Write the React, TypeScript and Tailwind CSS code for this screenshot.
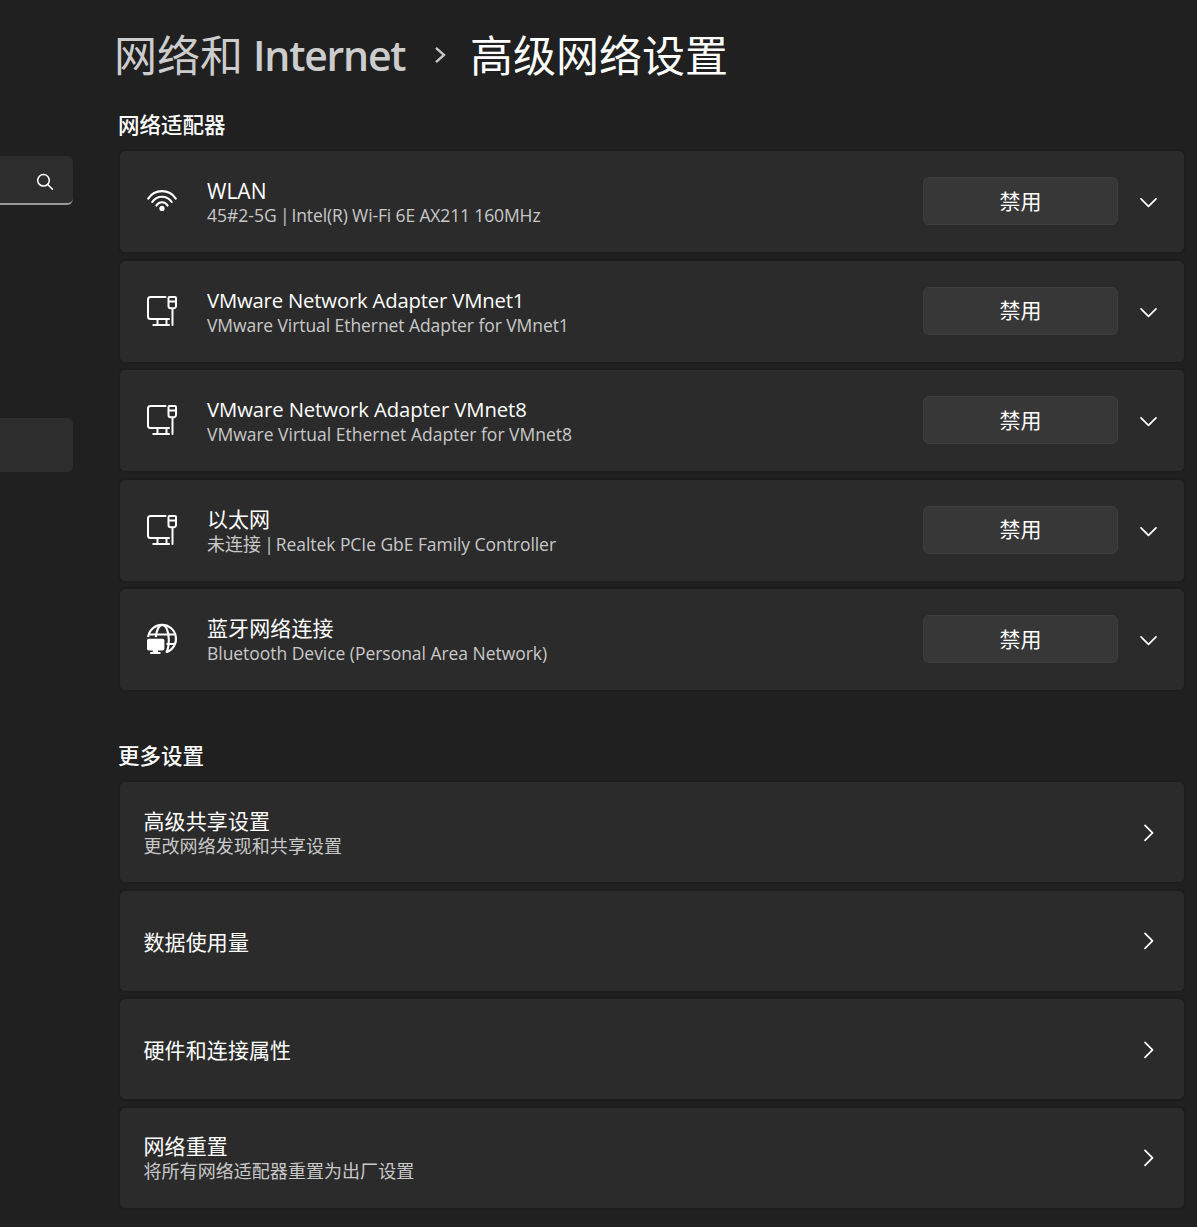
import type { ReactNode } from "react";

type Adapter = {
  icon: ReactNode;
  title: string;
  titleClass: string;
  status?: string;
  statusClass?: string;
  detail: string;
  detailClass: string;
};

function WifiIcon() {
  return (
    <svg width="32" height="32" viewBox="0 0 32 32" fill="none" stroke="#fff" strokeWidth="2.1" strokeLinecap="round">
      <path d="M2.200 13.600A16.500 16.500 0 0 1 29.800 13.600" />
      <path d="M6.300 17A11.600 11.600 0 0 1 25.700 17" />
      <path d="M10.400 20.600A6.400 6.400 0 0 1 21.600 20.600" />
      <circle cx="16" cy="23.400" r="2.600" fill="#fff" stroke="none" />
    </svg>
  );
}

function EthernetIcon() {
  return (
    <svg width="32" height="32" viewBox="0 0 32 32" fill="none" stroke="#fff" strokeWidth="2" strokeLinecap="round" strokeLinejoin="round">
      <path d="M19.500 2H4.500A2.500 2.500 0 0 0 2 4.500V21.500A2.500 2.500 0 0 0 4.500 24H23" />
      <path d="M11.500 24V29.500M20.500 24V29.500M7.300 30H23" />
      <path d="M23.500 2H29A1 1 0 0 1 30 3V11A2.300 2.300 0 0 1 27.700 13.300H24.800A2.300 2.300 0 0 1 22.500 11V3A1 1 0 0 1 23.500 2ZM22.500 6.500H30M26.500 13.500V30" />
    </svg>
  );
}

function GlobeIcon() {
  return (
    <svg width="32" height="32" viewBox="0 0 32 32" fill="none" stroke="#fff" strokeWidth="2.100">
      <path d="M2.100 14.200A14 14 0 1 1 20.200 29.200" />
      <path d="M9.800 14.200C10.500 7 13 2 16.200 2C20 2 22.800 8.500 22.800 16.500C22.800 22 21.800 27 20.200 29.500" />
      <path d="M3.500 11.500H28.800M20.500 21H28.800" />
      <rect x="1" y="15.700" width="17.400" height="11.800" rx="1.800" fill="#fff" stroke="none" />
      <path d="M6.800 27H12V29H14.500V31H4.200V29H6.800Z" fill="#fff" stroke="none" />
    </svg>
  );
}

function ChevronDown() {
  return (
    <svg width="18" height="18" viewBox="0 0 18 18" fill="none" stroke="#fff" strokeWidth="1.700" strokeLinecap="round" strokeLinejoin="round">
      <path d="M2 5.800L9.500 13.300L17 5.800" />
    </svg>
  );
}

function ChevronRight() {
  return (
    <svg width="18" height="18" viewBox="0 0 18 18" fill="none" stroke="#fff" strokeWidth="1.700" strokeLinecap="round" strokeLinejoin="round">
      <path d="M6 1.300L13.500 8.800L6 16.300" />
    </svg>
  );
}

const adapters: Adapter[] = [
  { icon: <WifiIcon />, title: "WLAN", titleClass: "text-[21px] leading-[28px]", status: "45#2-5G", statusClass: "", detail: "Intel(R) Wi-Fi 6E AX211 160MHz", detailClass: "tracking-[-0.13px]" },
  { icon: <EthernetIcon />, title: "VMware Network Adapter VMnet1", titleClass: "text-[20.3px] leading-[26px] tracking-[-0.18px]", detail: "VMware Virtual Ethernet Adapter for VMnet1", detailClass: "tracking-[-0.07px]" },
  { icon: <EthernetIcon />, title: "VMware Network Adapter VMnet8", titleClass: "text-[20.3px] leading-[26px] tracking-[-0.09px]", detail: "VMware Virtual Ethernet Adapter for VMnet8", detailClass: "tracking-[0.01px]" },
  { icon: <EthernetIcon />, title: "以太网", titleClass: "text-[21px] leading-[26px]", status: "未连接", statusClass: "text-[18px]", detail: "Realtek PCIe GbE Family Controller", detailClass: "tracking-[-0.06px]" },
  { icon: <GlobeIcon />, title: "蓝牙网络连接", titleClass: "text-[21px] leading-[26px] tracking-[0.1px]", detail: "Bluetooth Device (Personal Area Network)", detailClass: "tracking-[-0.04px]" },
];

const settings = [
  { title: "高级共享设置", detail: "更改网络发现和共享设置" },
  { title: "数据使用量" },
  { title: "硬件和连接属性" },
  { title: "网络重置", detail: "将所有网络适配器重置为出厂设置" },
];

function AdapterCard({ icon, title, titleClass, status, statusClass, detail, detailClass }: Adapter) {
  return (
    <div className="flex h-[101px] shrink-0 items-center rounded-[5px] bg-[#2b2b2b] pl-[26px] pr-[27px] shadow-[0_0_0_2px_#1d1d1d]">
      <div className="mb-px size-8 shrink-0">{icon}</div>
      <div className="ml-[29px] flex-1 whitespace-nowrap pt-[2px]">
        <div className="h-[26px] text-white">
          <div className={titleClass}>{title}</div>
        </div>
        <div className="h-[25px] text-[17.5px] leading-[25px] text-[#c8c8c8]">
          {status && (
            <>
              <span className={statusClass}>{status}</span>
              <span className="tracking-[-1.3px]"> | </span>
            </>
          )}
          <span className={detailClass}>{detail}</span>
        </div>
      </div>
      <button className="mb-px h-12 w-[195px] rounded-[6px] border border-[#3e3e3e] bg-[#373737] text-[21px] leading-none text-white">禁用</button>
      <div className="ml-[21px] pt-px"><ChevronDown /></div>
    </div>
  );
}

export default function App() {
  return (
    <div className="flex h-[1227px] w-[1197px] overflow-hidden bg-[#202020] font-['Open_Sans','Noto_Sans_CJK_SC',sans-serif]">
      <aside className="w-[73px] shrink-0">
        <div className="mt-[156px] flex h-[49px] items-center justify-end overflow-hidden rounded-r-[6px] border-b-2 border-[#9a9a9a] bg-[#2d2d2d] pr-[19px]">
          <svg width="18" height="18" viewBox="0 0 18 18" fill="none" stroke="#fff" strokeWidth="1.500" strokeLinecap="round" className="mt-[5px]">
            <circle cx="7.500" cy="7.300" r="5.800" />
            <path d="M11.700 11.500L16.500 16.300" />
          </svg>
        </div>
        <div className="mt-[213px] h-[54px] rounded-r-[6px] bg-[#2d2d2d]" />
      </aside>
      <main className="ml-[47px] w-[1064px] shrink-0">
        <h1 className="-ml-[6px] mt-[26px] flex h-[60px] items-center whitespace-nowrap text-[43px] leading-[60px]">
          <span className="w-[128px] text-[#cccccc]">网络和</span>
          <span className="mb-[2px] ml-[11px] w-[152px] text-[41px] font-semibold tracking-[-1.2px] text-[#cccccc]">Internet</span>
          <svg width="12" height="18" viewBox="0 0 12 18" fill="none" stroke="#c5c5c5" strokeWidth="2.400" className="mb-[2px] ml-[29px]">
            <path d="M2 1.800L10 9L2 16.200" />
          </svg>
          <span className="ml-[24px] text-white">高级网络设置</span>
        </h1>
        <h2 className="-ml-[2px] mt-[24px] h-[30px] text-[21.500px] font-medium leading-[30px] text-white">网络适配器</h2>
        <section className="mt-[11px] flex flex-col gap-[8.500px]">
          {adapters.map((a) => <AdapterCard key={a.title} {...a} />)}
        </section>
        <h2 className="-ml-[2px] mt-[51px] h-[30px] text-[21.500px] font-medium leading-[30px] text-white">更多设置</h2>
        <section className="mt-[11px] flex flex-col gap-[8.670px]">
          {settings.map((s) => (
            <div key={s.title} className="flex h-[100px] shrink-0 items-center justify-between rounded-[5px] bg-[#2b2b2b] pl-[23.500px] pr-[27px] shadow-[0_0_0_2px_#1d1d1d]">
              <div className="pt-[2px]">
                <div className="h-[26px] text-[21px] leading-[26px] tracking-[0.1px] text-white">{s.title}</div>
                {s.detail && <div className="h-[25px] text-[18px] leading-[25px] tracking-[0.05px] text-[#c8c8c8]">{s.detail}</div>}
              </div>
              <div className="pt-px"><ChevronRight /></div>
            </div>
          ))}
        </section>
      </main>
    </div>
  );
}
